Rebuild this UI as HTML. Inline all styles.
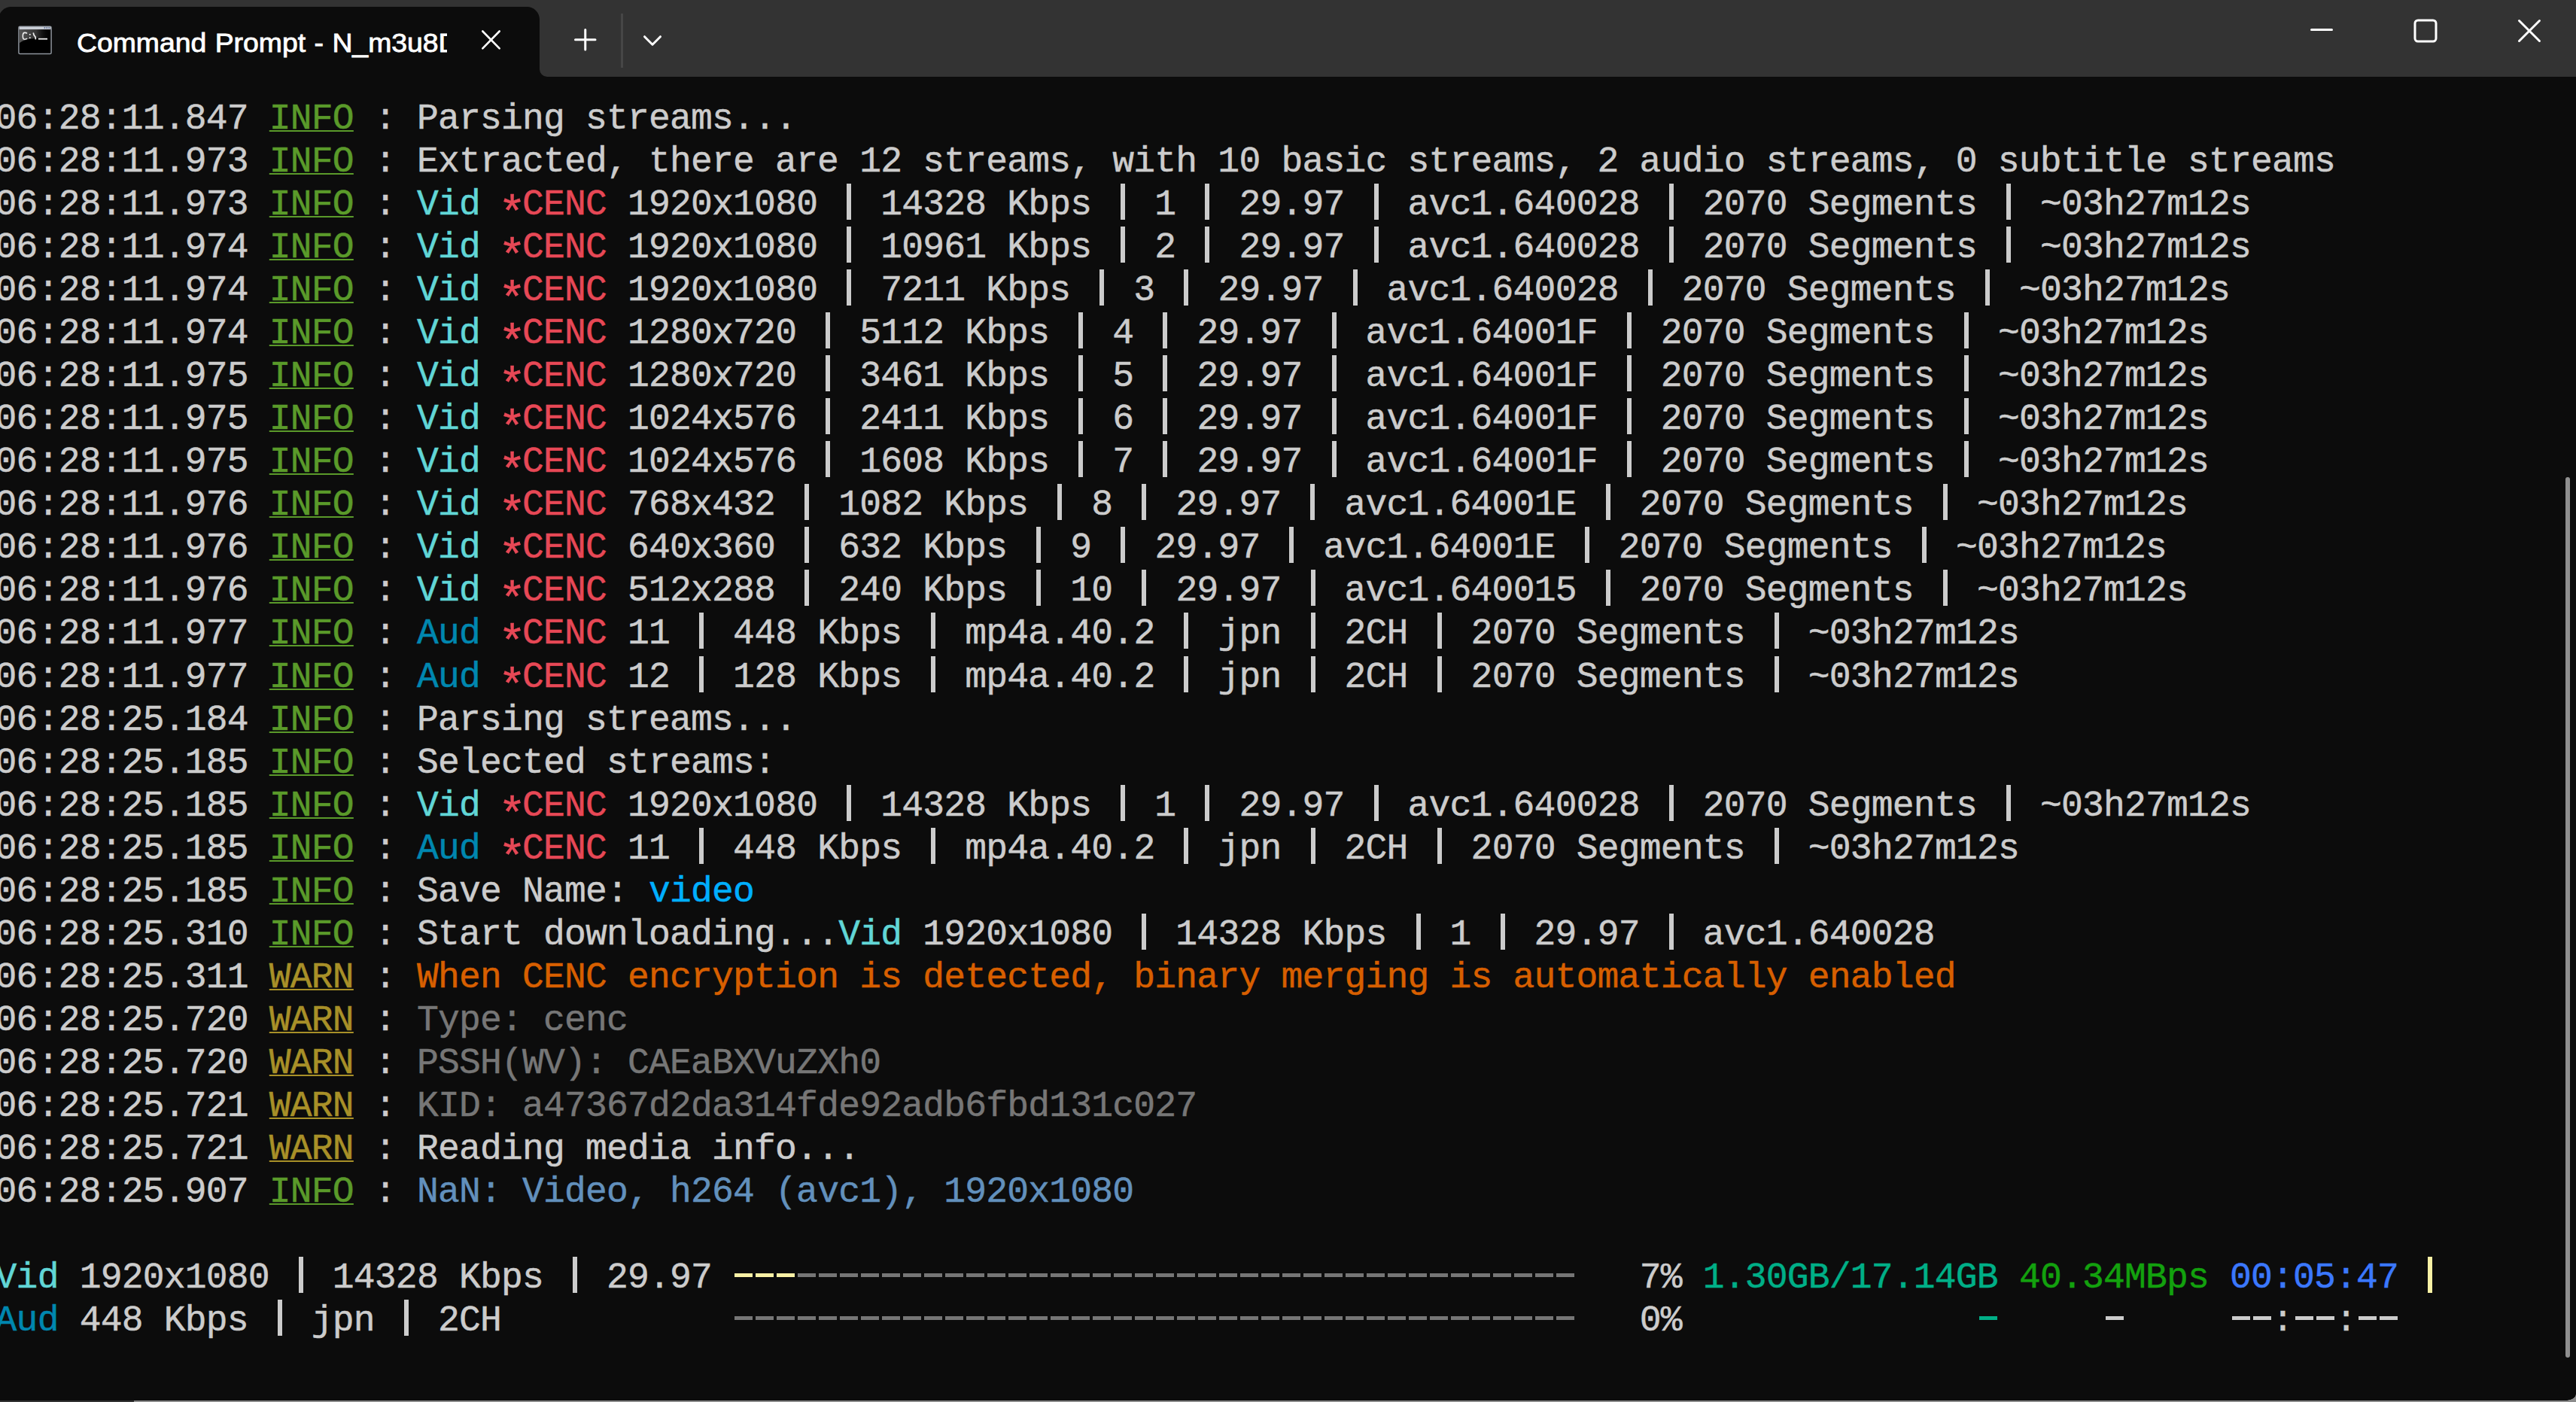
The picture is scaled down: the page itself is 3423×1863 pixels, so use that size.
<!DOCTYPE html>
<html><head><meta charset="utf-8"><style>
*{margin:0;padding:0;box-sizing:border-box}
html,body{width:3423px;height:1863px;overflow:hidden;background:#0c0c0c}
body{position:relative}
.abs{position:absolute}
.row{position:absolute;left:-6.4px;height:57px;line-height:57px;font-family:"Liberation Mono",monospace;font-size:48px;letter-spacing:-0.792px;white-space:pre;color:#cccccc;-webkit-text-stroke-width:0.5px}
.i{color:#5a9a2a;text-decoration:underline;text-decoration-thickness:2px;text-underline-offset:2px}
.w{color:#a89028;text-decoration:underline;text-decoration-thickness:2px;text-underline-offset:2px}
.v{color:#61d6d6} .a{color:#0087af} .r{color:#e74856}
.ast{font-size:62px;letter-spacing:-9.2px;position:relative;left:-4px;top:17px;line-height:0}
.p{color:transparent;padding-top:4px;background:linear-gradient(to right,transparent 11px,#cccccc 11px,#cccccc 17px,transparent 17px) 0 3px/28px 48px no-repeat}
.gr{color:#767676} .or{color:#d75f00} .st{color:#6290bc} .sky{color:#00afff}
.tl{color:#00af87} .gn{color:#13a10e} .bl{color:#3b78ff}
.d{color:transparent;background-repeat:repeat-x;background-size:28.013px 5px;background-position:0 21px}
.dy{background-image:linear-gradient(to right,transparent 2px,#f9f1a5 2px,#f9f1a5 26px,transparent 26px)}
.dg{background-image:linear-gradient(to right,transparent 2px,#767676 2px,#767676 26px,transparent 26px)}
.dt{background-image:linear-gradient(to right,transparent 3px,#00af87 3px,#00af87 27px,transparent 27px)}
.dw{background-image:linear-gradient(to right,transparent 3px,#cccccc 3px,#cccccc 27px,transparent 27px)}
.title{position:absolute;left:102px;top:32px;width:461px;height:50px;overflow:hidden;white-space:nowrap;font-family:"Liberation Sans",sans-serif;font-size:35px;line-height:50px;color:#ffffff;word-spacing:1px;transform:scaleX(1.067);transform-origin:0 0;-webkit-text-stroke:0.8px #fff}
</style></head><body>

<div class="abs" style="left:0;top:0;width:760px;height:60px;background:#333333"></div>
<div class="abs" style="left:-2px;top:9px;width:719px;height:100px;background:#0c0c0c;border-radius:17px 17px 0 0"></div>
<div class="abs" style="left:717px;top:0;width:2706px;height:102px;background:#333333;border-bottom-left-radius:10px"></div>
<!-- icon -->
<svg class="abs" style="left:20px;top:30px" width="55" height="46" viewBox="0 0 55 46">
  <defs><linearGradient id="ig" x1="0" y1="0" x2="1" y2="0"><stop offset="0" stop-color="#555"/><stop offset="0.55" stop-color="#333"/><stop offset="1" stop-color="#000" stop-opacity="0"/></linearGradient></defs>
  <rect x="4.9" y="5.2" width="43.2" height="36.3" rx="1.5" fill="#000" stroke="#8d939b" stroke-width="1.5"/>
  <path d="M5.6 9 H47.4 V20 C33 20.5 14 20 5.6 27.5 Z" fill="url(#ig)"/>
  <rect x="5.6" y="5.6" width="41.8" height="3.5" fill="#c9ced6"/>
  <circle cx="39.4" cy="7" r="0.9" fill="#5a6a90"/><circle cx="42.3" cy="7" r="0.9" fill="#5a6a90"/><circle cx="45.2" cy="7" r="0.9" fill="#5a6a90"/>
  <path d="M16 14.6 Q15 13.4 12.9 13.4 Q10.3 13.4 10.3 17.9 Q10.3 22.3 12.9 22.3 Q15 22.3 16 21.1" stroke="#eee" stroke-width="1.6" fill="none"/>
  <rect x="18.9" y="15" width="1.7" height="1.7" fill="#eee"/><rect x="18.9" y="19.3" width="1.7" height="1.7" fill="#eee"/>
  <path d="M24.2 13.4 L25.2 16.8 L27 19 L27.4 22.4" stroke="#eee" stroke-width="1.7" fill="none"/>
  <rect x="30.9" y="20.8" width="12.1" height="1.8" fill="#eee"/>
</svg>
<div class="title">Command Prompt - N_m3u8DL-RE</div>
<svg class="abs" style="left:636px;top:36px" width="34" height="34" viewBox="0 0 34 34">
  <path d="M5.3 5.5 L27.7 28.3 M27.7 5.5 L5.3 28.3" stroke="#fff" stroke-width="2.6" stroke-linecap="round" fill="none"/>
</svg>
<svg class="abs" style="left:758px;top:33px" width="40" height="40" viewBox="0 0 40 40">
  <path d="M19.75 6.5 V33 M6.5 19.75 H33" stroke="#fff" stroke-width="3" stroke-linecap="round" fill="none"/>
</svg>
<div class="abs" style="left:825px;top:18px;width:3px;height:72px;background:#474747"></div>
<svg class="abs" style="left:850px;top:40px" width="34" height="26" viewBox="0 0 34 26">
  <path d="M6.5 8.7 L17 19.2 L27.5 8.7" stroke="#fff" stroke-width="3" stroke-linecap="round" stroke-linejoin="round" fill="none"/>
</svg>
<svg class="abs" style="left:3060px;top:30px" width="50" height="20" viewBox="0 0 50 20">
  <path d="M11.5 9.5 H38.5" stroke="#fff" stroke-width="3" stroke-linecap="round"/>
</svg>
<svg class="abs" style="left:3200px;top:18px" width="46" height="46" viewBox="0 0 46 46">
  <rect x="9" y="9" width="28" height="28" rx="4" stroke="#fff" stroke-width="3" fill="none"/>
</svg>
<svg class="abs" style="left:3338px;top:18px" width="46" height="46" viewBox="0 0 46 46">
  <path d="M9.5 9.5 L36.5 36.5 M36.5 9.5 L9.5 36.5" stroke="#fff" stroke-width="3" stroke-linecap="round" fill="none"/>
</svg>

<div class="row" style="top:130px">06:28:11.847 <span class="i">INFO</span> : Parsing streams...</div><div class="row" style="top:187px">06:28:11.973 <span class="i">INFO</span> : Extracted, there are 12 streams, with 10 basic streams, 2 audio streams, 0 subtitle streams</div><div class="row" style="top:244px">06:28:11.973 <span class="i">INFO</span> : <span class="v">Vid</span> <span class="r"><span class="ast">*</span>CENC</span> 1920x1080 <span class="p">|</span> 14328 Kbps <span class="p">|</span> 1 <span class="p">|</span> 29.97 <span class="p">|</span> avc1.640028 <span class="p">|</span> 2070 Segments <span class="p">|</span> ~03h27m12s</div><div class="row" style="top:301px">06:28:11.974 <span class="i">INFO</span> : <span class="v">Vid</span> <span class="r"><span class="ast">*</span>CENC</span> 1920x1080 <span class="p">|</span> 10961 Kbps <span class="p">|</span> 2 <span class="p">|</span> 29.97 <span class="p">|</span> avc1.640028 <span class="p">|</span> 2070 Segments <span class="p">|</span> ~03h27m12s</div><div class="row" style="top:358px">06:28:11.974 <span class="i">INFO</span> : <span class="v">Vid</span> <span class="r"><span class="ast">*</span>CENC</span> 1920x1080 <span class="p">|</span> 7211 Kbps <span class="p">|</span> 3 <span class="p">|</span> 29.97 <span class="p">|</span> avc1.640028 <span class="p">|</span> 2070 Segments <span class="p">|</span> ~03h27m12s</div><div class="row" style="top:415px">06:28:11.974 <span class="i">INFO</span> : <span class="v">Vid</span> <span class="r"><span class="ast">*</span>CENC</span> 1280x720 <span class="p">|</span> 5112 Kbps <span class="p">|</span> 4 <span class="p">|</span> 29.97 <span class="p">|</span> avc1.64001F <span class="p">|</span> 2070 Segments <span class="p">|</span> ~03h27m12s</div><div class="row" style="top:472px">06:28:11.975 <span class="i">INFO</span> : <span class="v">Vid</span> <span class="r"><span class="ast">*</span>CENC</span> 1280x720 <span class="p">|</span> 3461 Kbps <span class="p">|</span> 5 <span class="p">|</span> 29.97 <span class="p">|</span> avc1.64001F <span class="p">|</span> 2070 Segments <span class="p">|</span> ~03h27m12s</div><div class="row" style="top:529px">06:28:11.975 <span class="i">INFO</span> : <span class="v">Vid</span> <span class="r"><span class="ast">*</span>CENC</span> 1024x576 <span class="p">|</span> 2411 Kbps <span class="p">|</span> 6 <span class="p">|</span> 29.97 <span class="p">|</span> avc1.64001F <span class="p">|</span> 2070 Segments <span class="p">|</span> ~03h27m12s</div><div class="row" style="top:586px">06:28:11.975 <span class="i">INFO</span> : <span class="v">Vid</span> <span class="r"><span class="ast">*</span>CENC</span> 1024x576 <span class="p">|</span> 1608 Kbps <span class="p">|</span> 7 <span class="p">|</span> 29.97 <span class="p">|</span> avc1.64001F <span class="p">|</span> 2070 Segments <span class="p">|</span> ~03h27m12s</div><div class="row" style="top:643px">06:28:11.976 <span class="i">INFO</span> : <span class="v">Vid</span> <span class="r"><span class="ast">*</span>CENC</span> 768x432 <span class="p">|</span> 1082 Kbps <span class="p">|</span> 8 <span class="p">|</span> 29.97 <span class="p">|</span> avc1.64001E <span class="p">|</span> 2070 Segments <span class="p">|</span> ~03h27m12s</div><div class="row" style="top:700px">06:28:11.976 <span class="i">INFO</span> : <span class="v">Vid</span> <span class="r"><span class="ast">*</span>CENC</span> 640x360 <span class="p">|</span> 632 Kbps <span class="p">|</span> 9 <span class="p">|</span> 29.97 <span class="p">|</span> avc1.64001E <span class="p">|</span> 2070 Segments <span class="p">|</span> ~03h27m12s</div><div class="row" style="top:757px">06:28:11.976 <span class="i">INFO</span> : <span class="v">Vid</span> <span class="r"><span class="ast">*</span>CENC</span> 512x288 <span class="p">|</span> 240 Kbps <span class="p">|</span> 10 <span class="p">|</span> 29.97 <span class="p">|</span> avc1.640015 <span class="p">|</span> 2070 Segments <span class="p">|</span> ~03h27m12s</div><div class="row" style="top:814px">06:28:11.977 <span class="i">INFO</span> : <span class="a">Aud</span> <span class="r"><span class="ast">*</span>CENC</span> 11 <span class="p">|</span> 448 Kbps <span class="p">|</span> mp4a.40.2 <span class="p">|</span> jpn <span class="p">|</span> 2CH <span class="p">|</span> 2070 Segments <span class="p">|</span> ~03h27m12s</div><div class="row" style="top:872px">06:28:11.977 <span class="i">INFO</span> : <span class="a">Aud</span> <span class="r"><span class="ast">*</span>CENC</span> 12 <span class="p">|</span> 128 Kbps <span class="p">|</span> mp4a.40.2 <span class="p">|</span> jpn <span class="p">|</span> 2CH <span class="p">|</span> 2070 Segments <span class="p">|</span> ~03h27m12s</div><div class="row" style="top:929px">06:28:25.184 <span class="i">INFO</span> : Parsing streams...</div><div class="row" style="top:986px">06:28:25.185 <span class="i">INFO</span> : Selected streams:</div><div class="row" style="top:1043px">06:28:25.185 <span class="i">INFO</span> : <span class="v">Vid</span> <span class="r"><span class="ast">*</span>CENC</span> 1920x1080 <span class="p">|</span> 14328 Kbps <span class="p">|</span> 1 <span class="p">|</span> 29.97 <span class="p">|</span> avc1.640028 <span class="p">|</span> 2070 Segments <span class="p">|</span> ~03h27m12s</div><div class="row" style="top:1100px">06:28:25.185 <span class="i">INFO</span> : <span class="a">Aud</span> <span class="r"><span class="ast">*</span>CENC</span> 11 <span class="p">|</span> 448 Kbps <span class="p">|</span> mp4a.40.2 <span class="p">|</span> jpn <span class="p">|</span> 2CH <span class="p">|</span> 2070 Segments <span class="p">|</span> ~03h27m12s</div><div class="row" style="top:1157px">06:28:25.185 <span class="i">INFO</span> : Save Name: <span class="sky">video</span></div><div class="row" style="top:1214px">06:28:25.310 <span class="i">INFO</span> : Start downloading...<span class="v">Vid</span> 1920x1080 <span class="p">|</span> 14328 Kbps <span class="p">|</span> 1 <span class="p">|</span> 29.97 <span class="p">|</span> avc1.640028</div><div class="row" style="top:1271px">06:28:25.311 <span class="w">WARN</span> : <span class="or">When CENC encryption is detected, binary merging is automatically enabled</span></div><div class="row" style="top:1328px">06:28:25.720 <span class="w">WARN</span> : <span class="gr">Type: cenc</span></div><div class="row" style="top:1385px">06:28:25.720 <span class="w">WARN</span> : <span class="gr">PSSH(WV): CAEaBXVuZXh0</span></div><div class="row" style="top:1442px">06:28:25.721 <span class="w">WARN</span> : <span class="gr">KID: a47367d2da314fde92adb6fbd131c027</span></div><div class="row" style="top:1499px">06:28:25.721 <span class="w">WARN</span> : Reading media info...</div><div class="row" style="top:1556px">06:28:25.907 <span class="i">INFO</span> : <span class="st">NaN: Video, h264 (avc1), 1920x1080</span></div><div class="row" style="top:1670px"><span class="v">Vid</span> 1920x1080 <span class="p">|</span> 14328 Kbps <span class="p">|</span> 29.97 <span class="d dy">---</span><span class="d dg">-------------------------------------</span>   7% <span class="tl">1.30GB/17.14GB</span> <span class="gn">40.34MBps</span> <span class="bl">00:05:47</span></div><div class="row" style="top:1727px"><span class="a">Aud</span> 448 Kbps <span class="p">|</span> jpn <span class="p">|</span> 2CH           <span class="d dg">----------------------------------------</span>   0%              <span class="d dt">-</span>     <span class="d dw">-</span>     <span class="d dw">--</span>:<span class="d dw">--</span>:<span class="d dw">--</span></div>

<div class="abs" style="left:3226px;top:1670px;width:6px;height:48px;background:#f9f1a5"></div>
<div class="abs" style="left:3409px;top:634px;width:6px;height:1170px;background:#8f8f8f;border-radius:3px"></div>
<div class="abs" style="left:0;top:1861px;width:3423px;height:2px;background:#8c8c8c"></div>
<div class="abs" style="left:0;top:1861px;width:178px;height:2px;background:#333333"></div>
<div class="abs" style="left:3409px;top:1853px;width:14px;height:10px;background:radial-gradient(14px 8px at 0 0,transparent 95%,#8c8c8c 100%)"></div>

</body></html>
